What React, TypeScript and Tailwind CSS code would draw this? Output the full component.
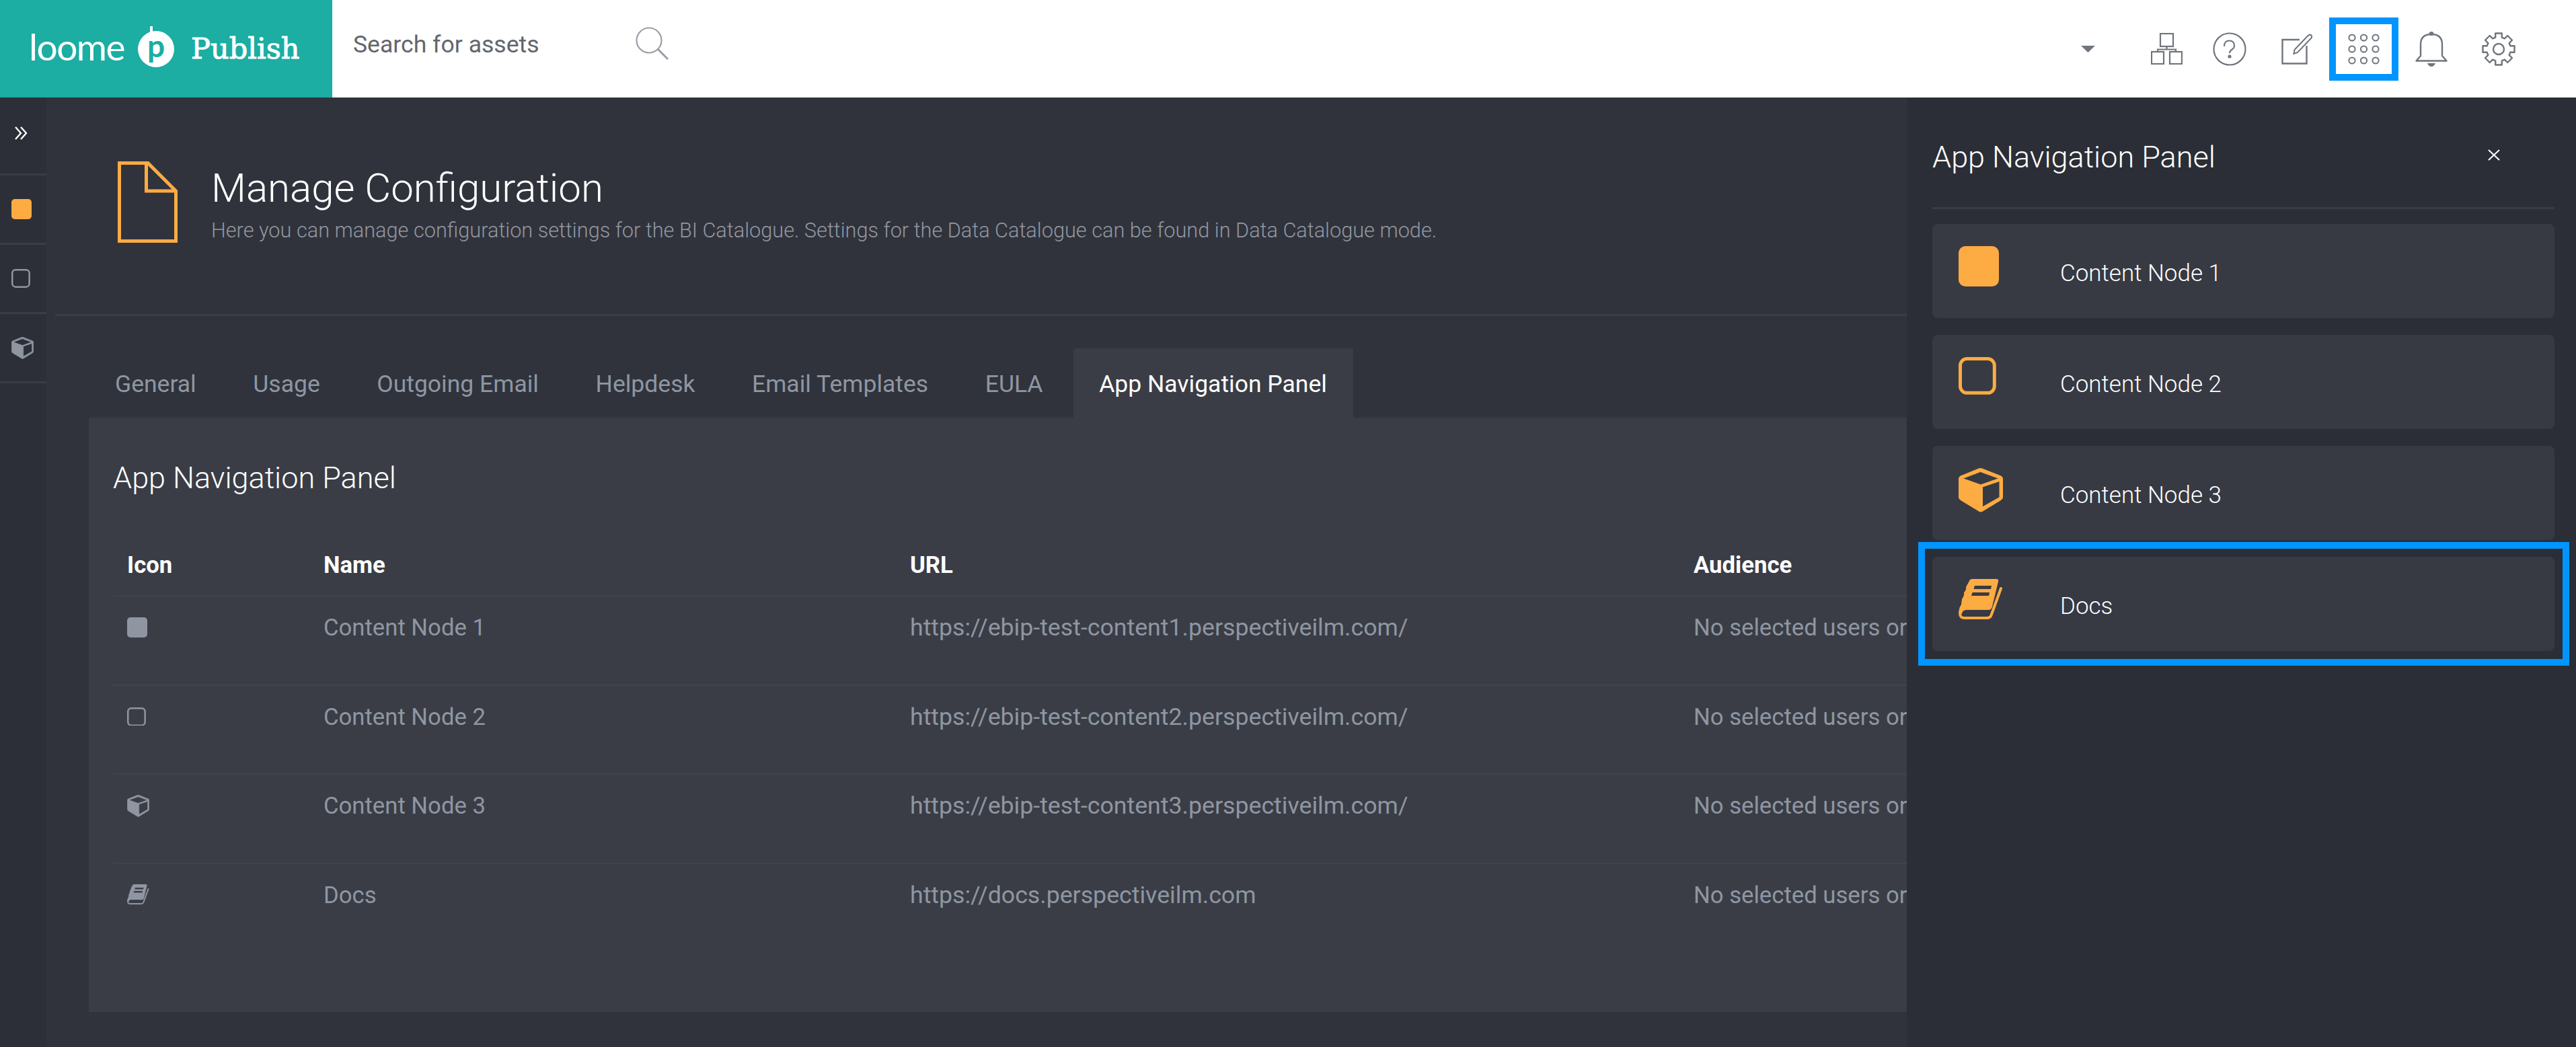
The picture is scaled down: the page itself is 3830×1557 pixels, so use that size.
import React from "react";

const ORANGE = "#fdab43";
const GRAY = "#8f96a1";
const TOP = "#6f757d";

function Solid({ c, s }: { c: string; s: number }) {
  return (
    <svg width={s} height={s} viewBox="0 0 60 60">
      <rect width="60" height="60" rx="10" fill={c} />
    </svg>
  );
}
function Outline({ c, s }: { c: string; s: number }) {
  return (
    <svg width={s} height={s} viewBox="0 0 56 56">
      <rect x="2.5" y="2.5" width="51" height="51" rx="10" fill="none" stroke={c} strokeWidth="5" />
    </svg>
  );
}
function Cube({ c, s }: { c: string; s: number }) {
  return (
    <svg width={s} height={s} viewBox="0 0 66 66">
      <path
        fillRule="evenodd"
        fill={c}
        stroke={c}
        strokeWidth="1"
        strokeLinejoin="round"
        d="M32.5 0.5 Q33.5 0.5 35 1 L63 12 Q65.5 13 65.5 16 V43 Q65.5 46 63 47.5 L35 64.5 Q33 65.5 31 64.5 L3 47.5 Q0.5 46 0.5 43 V16 Q0.5 13 3 12 L30 1 Q31.5 0.5 32.5 0.5 Z M32.5 5.5 L6 15.5 L33 25 L60 15.5 Z M35.5 28 V58 L61 43.5 V19.5 Z"
      />
    </svg>
  );
}
function Book({ c, s }: { c: string; s: number }) {
  return (
    <svg width={s} height={s * 0.91} viewBox="0 0 66 60">
      <path
        fillRule="evenodd"
        fill={c}
        d="M16 3 Q17 0 20 0 H56 Q60 0 59 4 L50 41 Q49 46 44 46 H11 Q5 47 5 52 L0.5 50 L0.5 47 Q1 42 4 38 L5 30 Q9 24 8 20 Q12 16 11 12 Z M24 10 H49 L48 15 H22.5 Z M20.5 20 H46 L45 25 H19 Z"
      />
      <path
        d="M2.5 48 Q0.5 58 9 58 H42 Q47 58 48.5 54 L63 14"
        fill="none"
        stroke={c}
        strokeWidth="4"
        strokeLinecap="round"
      />
    </svg>
  );
}

function gearPath() {
  const n = 8;
  const out = 24;
  const inn = 18;
  const pts: string[] = [];
  for (let i = 0; i < n; i++) {
    const a = (i * Math.PI * 2) / n - Math.PI / 2;
    const list: [number, number][] = [
      [inn, a - 0.27],
      [out, a - 0.2],
      [out, a + 0.2],
      [inn, a + 0.27],
    ];
    for (const [r, t] of list) {
      pts.push(`${(25 + r * Math.cos(t)).toFixed(2)} ${(25 + r * Math.sin(t)).toFixed(2)}`);
    }
  }
  return "M" + pts.join(" L") + " Z";
}

function HeaderIcons() {
  return (
    <div className="flex items-center">
      <svg width="21" height="10" viewBox="0 0 21 10">
        <path d="M0 0 H21 L10.5 10 Z" fill={TOP} />
      </svg>
      <svg className="ml-[83px]" width="47" height="47" viewBox="0 0 47 47" fill="none" stroke={TOP} strokeWidth="2.2">
        <rect x="14" y="1" width="19" height="19" />
        <rect x="1" y="28" width="18" height="18" />
        <rect x="28" y="28" width="18" height="18" />
        <path d="M23.5 20 V24.5 M10 28 V24.5 H37 V28" />
      </svg>
      <svg className="ml-[45px]" width="50" height="50" viewBox="0 0 50 50" fill="none" stroke={TOP} strokeWidth="2.2">
        <circle cx="25" cy="25" r="23.5" />
        <path d="M17 21 Q17 12.5 24.5 12.5 Q32 12.5 32 20 Q32 23.5 28 26 Q25 28 25 31" />
        <circle cx="25" cy="36" r="1.5" fill={TOP} />
      </svg>
      <svg className="ml-[52px]" width="46" height="46" viewBox="0 0 46 46" fill="none" stroke={TOP} strokeWidth="2.4">
        <path d="M27 9 H1.5 V44.5 H37.5 V18" />
        <path d="M19.5 24 L39.5 3 Q42 0.5 44.5 2.5 Q46 5 44 7 L24 28 L18.5 30 Z" strokeWidth="2" />
      </svg>
      <div className="relative ml-[53px] flex h-[46px] w-[47px] items-center justify-center">
        <svg width="47" height="46" viewBox="0 0 47 46" fill="none" stroke={TOP} strokeWidth="2">
          {[6, 23.5, 41].map((x) =>
            [6, 23, 40].map((y) => <circle key={`${x}-${y}`} cx={x} cy={y} r="4.6" />)
          )}
        </svg>
        <div className="absolute left-[-28px] top-[-24px] h-[94px] w-[103px] border-[10px] border-[#0095ff]" />
      </div>
      <svg className="ml-[53px]" width="48" height="52" viewBox="0 0 48 52" fill="none" stroke={TOP} strokeWidth="2.4" strokeLinejoin="round">
        <path d="M1.5 43.5 L8 36 V19 Q8 4 24 4 Q40 4 40 19 V36 L46.5 43.5 Z" />
        <ellipse cx="24" cy="3" rx="3.4" ry="3" fill={TOP} stroke="none" />
        <path d="M18 47 H30 Q28 52 24 52 Q20 52 18 47 Z" fill={TOP} stroke="none" />
      </svg>
      <svg className="ml-[51px]" width="50" height="50" viewBox="0 0 50 50" fill="none" stroke={TOP} strokeWidth="2.4" strokeLinejoin="round">
        <path d={gearPath()} />
        <circle cx="25" cy="25" r="8" />
      </svg>
    </div>
  );
}

const TABS = ["General", "Usage", "Outgoing Email", "Helpdesk", "Email Templates", "EULA"];
const ROWS = [
  { name: "Content Node 1", url: "https://ebip-test-content1.perspectiveilm.com/", kind: "solid" },
  { name: "Content Node 2", url: "https://ebip-test-content2.perspectiveilm.com/", kind: "outline" },
  { name: "Content Node 3", url: "https://ebip-test-content3.perspectiveilm.com/", kind: "cube" },
  { name: "Docs", url: "https://docs.perspectiveilm.com", kind: "book" },
];

function NodeIcon({ kind, c, s }: { kind: string; c: string; s: number }) {
  if (kind === "solid") return <Solid c={c} s={s} />;
  if (kind === "outline") return <Outline c={c} s={s * 0.93} />;
  if (kind === "cube") return <Cube c={c} s={s * 1.1} />;
  return <Book c={c} s={s * 1.1} />;
}

export default function App() {
  return (
    <div
      className="flex h-[1557px] w-[3830px] flex-col overflow-hidden bg-[#30333c]"
      style={{ fontFamily: "Roboto, sans-serif" }}
    >
      <header className="flex h-[145px] shrink-0 items-center bg-white">
        <div className="flex h-full w-[494px] shrink-0 items-center bg-[#1cada3] pl-[43px] text-white">
          <span className="mb-[6px] w-[155px] text-[55px] leading-none tracking-[-1.5px]" style={{ fontFamily: "Lato, sans-serif" }}>
            loome
          </span>
          <span className="relative ml-[7px] flex h-[54px] w-[54px] items-center justify-center rounded-full bg-white">
            <span className="absolute left-[18px] top-[-7px] h-[10px] w-[4px] bg-white" />
            <span className="text-[46px] font-bold leading-none text-[#1cada3]" style={{ fontFamily: "Lato, sans-serif" }}>
              <span className="relative top-[-5px]">p</span>
            </span>
          </span>
          <span className="ml-[25px] text-[43px] leading-none [-webkit-text-stroke:1px_white]" style={{ fontFamily: "'DejaVu Serif', serif" }}>
            Publish
          </span>
        </div>
        <div className="ml-[31px] flex w-[470px] items-center justify-between">
          <span className="mb-[12px] text-[35.6px] text-[#62666d]">Search for assets</span>
          <svg className="mb-[16px]" width="50" height="50" viewBox="0 0 50 50" fill="none" stroke="#9a9fa6" strokeWidth="2.2">
            <circle cx="20" cy="20" r="18.5" />
            <path d="M33 33 L48 48" strokeWidth="3" />
          </svg>
        </div>
        <div className="ml-auto mr-[90px]">
          <HeaderIcons />
        </div>
      </header>

      <div className="flex min-h-0 flex-1">
        <aside className="w-[69px] shrink-0 bg-[#2c2f37]">
          <div className="flex h-[116px] items-center justify-start border-b-[3px] border-[#3a3c49] pb-[8px] pl-[22px]">
            <svg width="19" height="20" viewBox="0 0 19 20" fill="none" stroke="#fff" strokeWidth="2.4">
              <path d="M1 1 L9 10 L1 19 M9 1 L17 10 L9 19" />
            </svg>
          </div>
          {["solid", "outline", "cube"].map((k, i) => (
            <div key={k} className="flex h-[103px] items-center border-b-[3px] border-[#3a3c49] pl-[17px]">
              <NodeIcon kind={k} c={i === 0 ? ORANGE : GRAY} s={30} />
            </div>
          ))}
        </aside>

        <main className="min-w-0 flex-1 overflow-hidden">
          <div className="flex h-[322px] items-start pl-[106px] pt-[95px]">
            <svg width="89" height="121" viewBox="0 0 89 121" fill="none" stroke={ORANGE} strokeWidth="5">
              <path d="M2.5 2.5 H45 L86.5 44 V118.5 H2.5 Z" />
              <path d="M42.5 2.5 V44 H86.5" />
            </svg>
            <div className="ml-[50px] mt-[5px]">
              <h1 className="text-[60px] font-light leading-[70px] text-white">Manage Configuration</h1>
              <p className="mt-[10px] whitespace-nowrap text-[30.7px] font-light leading-[36px] text-[#9297a0]">
                Here you can manage configuration settings for the BI Catalogue. Settings for the Data Catalogue can be found in Data Catalogue mode.
              </p>
            </div>
          </div>
          <div className="ml-[13px] h-[3px] bg-[#3a3c49]" />

          <div className="w-[3600px] pl-[63px]">
            <div className="mt-[48px] flex h-[103px] gap-[6.6px]">
              {TABS.map((t) => (
                <div key={t} className="flex items-center whitespace-nowrap px-[39px] pt-[4px] text-[35.5px] text-[#8f96a1]">
                  {t}
                </div>
              ))}
              <div className="flex items-center whitespace-nowrap rounded-t-[4px] bg-[#3a3d46] pl-[38px] pr-[39px] pt-[4px] text-[35.5px] text-white">
                App Navigation Panel
              </div>
            </div>
            <section className="h-[884px] bg-[#3a3d46] pl-[36px]">
              <h2 className="pt-[62px] text-[45px] font-light leading-[56px] text-white">App Navigation Panel</h2>
              <div className="mt-[79px] grid h-[67px] grid-cols-[292px_872px_1165px_1fr] px-[21px] text-[34.7px] font-bold leading-[44px] text-white">
                <span>Icon</span>
                <span>Name</span>
                <span>URL</span>
                <span>Audience</span>
              </div>
              {ROWS.map((r) => (
                <div
                  key={r.name}
                  className="grid h-[132.5px] grid-cols-[292px_872px_1165px_1fr] border-t-[2px] border-[#41444e] px-[21px] pt-[24px] text-[34.7px] leading-[44px] text-[#8f96a1]"
                >
                  <span className="flex h-[44px] items-center">
                    <NodeIcon kind={r.kind} c={GRAY} s={30} />
                  </span>
                  <span>{r.name}</span>
                  <span className="text-[35.7px]">{r.url}</span>
                  <span className="whitespace-nowrap">No selected users or groups</span>
                </div>
              ))}
            </section>
          </div>
        </main>

        <aside className="w-[995px] shrink-0 bg-[#2b2e36] pl-[38px] pr-[32px]">
          <div className="flex h-[166px] items-center justify-between border-b-[3px] border-[#3a3c49] pt-[14px]">
            <h2 className="text-[45px] font-light leading-none text-white">App Navigation Panel</h2>
            <svg className="mb-[7px] mr-[81px]" width="18" height="17" viewBox="0 0 18 17" stroke="#fff" strokeWidth="2">
              <path d="M1 1 L17 16 M17 1 L1 16" />
            </svg>
          </div>
          <div className="mt-[22px] flex flex-col gap-[25px]">
            {ROWS.map((r, i) => (
              <div key={r.name} className="relative flex h-[140px] items-start rounded-[8px] bg-[#373a43] pl-[39px] pt-[33px]">
                <span className="w-[151px]">
                  <NodeIcon kind={r.kind} c={ORANGE} s={60} />
                </span>
                <span className="mt-[19px] text-[35px] font-light leading-[44px] text-white">{r.name}</span>
                {i === 3 && (
                  <div className="absolute left-[-21px] top-[-22px] h-[184px] w-[968px] border-[10px] border-[#0095ff]" />
                )}
              </div>
            ))}
          </div>
        </aside>
      </div>
    </div>
  );
}
